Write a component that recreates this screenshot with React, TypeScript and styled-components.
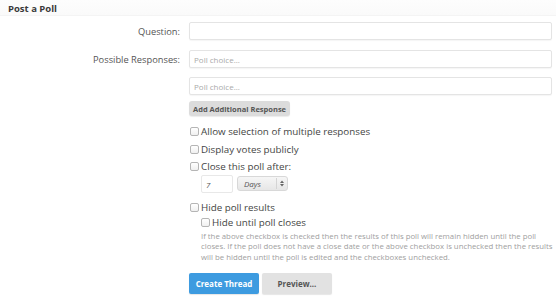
import React from "react";
import styled, { createGlobalStyle } from "styled-components";

const Global = createGlobalStyle`
  html, body { margin: 0; padding: 0; background: #fff; }
  body { font-family: "Open Sans", "Liberation Sans", sans-serif; color: #444; }
  * { box-sizing: border-box; }
`;

const Page = styled.div`
  width: 556px;
  height: 300px;
  overflow: hidden;
`;

const Header = styled.div`
  height: 16px;
  padding: 2px 0 0 8px;
  font-size: 9.5px;
  font-weight: 700;
  color: #3a3a3a;
  background: linear-gradient(#fdfdfd, #fafafa);
  border-bottom: 1px solid #f4f4f4;
`;

const Form = styled.div`
  display: grid;
  grid-template-columns: 180px 1fr;
  column-gap: 9px;
  padding: 6px 4px 0 0;
`;

const Label = styled.div<{ $top?: number }>`
  text-align: right;
  font-size: 9.3px;
  color: #555;
  padding-top: ${(p) => p.$top ?? 3}px;
`;

const Field = styled.div`
  display: flex;
  flex-direction: column;
  align-items: flex-start;
`;

const TextInput = styled.input`
  width: 363px;
  height: 18px;
  border: 1px solid #e4e4e4;
  border-radius: 2px;
  box-shadow: 0 1px 1px rgba(0, 0, 0, 0.04);
  background: #fff;
  font-family: inherit;
  font-size: 8px;
  padding: 0 4px;
  color: #444;
  outline: none;
  &::placeholder { color: #aaa; }
`;

const Stack = styled.div`
  display: flex;
  flex-direction: column;
  gap: 9px;
  margin-top: 10px;
`;

const SmallButton = styled.button`
  margin-top: 6px;
  height: 15px;
  padding: 0 4px;
  border: none;
  border-radius: 3px;
  background: #dcdcdc;
  box-shadow: 0 1px 1px rgba(0, 0, 0, 0.08);
  font-family: inherit;
  font-weight: 700;
  font-size: 7.5px;
  color: #555;
`;

const Options = styled.div`
  display: flex;
  flex-direction: column;
  margin-top: 7px;
`;

const CheckRow = styled.label<{ $indent?: number; $gap?: number }>`
  display: flex;
  align-items: center;
  gap: 2px;
  height: 17.5px;
  margin-left: ${(p) => p.$indent ?? 1}px;
  margin-top: ${(p) => p.$gap ?? 0}px;
  font-size: 9.8px;
  color: #444;
`;

const Box = styled.span`
  width: 9px;
  height: 9px;
  border: 1px solid #b5b5b5;
  border-radius: 2px;
  background: linear-gradient(#fff, #f0f0f0);
  flex: none;
`;

const DurationRow = styled.div`
  display: flex;
  align-items: center;
  gap: 4px;
  margin: -1px 0 0 12px;
`;

const NumInput = styled.div`
  width: 32px;
  height: 18px;
  border: 1px solid #e8e8e8;
  border-radius: 2px;
  font-size: 8px;
  font-style: italic;
  color: #555;
  padding: 3px 0 0 4px;
`;

const SelectBox = styled.div`
  width: 51px;
  height: 15px;
  border: 1px solid #d8d8d8;
  border-radius: 3px;
  background: linear-gradient(#f6f6f6, #e6e6e6);
  display: flex;
  align-items: center;
  justify-content: space-between;
  font-size: 8px;
  font-style: italic;
  color: #555;
  padding: 0 3px 0 6px;
`;

const Arrows = styled.span`
  display: flex;
  align-items: center;
  border-left: 1px solid #d4d4d4;
  padding-left: 3px;
  height: 11px;
`;

const Explain = styled.p`
  margin: -1px 0 0 12px;
  font-size: 7.8px;
  line-height: 10.5px;
  color: #a0a0a0;
  width: 352px;
`;

const Buttons = styled.div`
  display: flex;
  gap: 3px;
  margin-top: 11px;
`;

const Btn = styled.button<{ $primary?: boolean }>`
  width: 70px;
  height: 21px;
  padding: 0;
  white-space: nowrap;
  border: none;
  border-radius: 2px;
  font-family: inherit;
  font-weight: 700;
  font-size: 8px;
  color: ${(p) => (p.$primary ? "#fff" : "#555")};
  background: ${(p) => (p.$primary ? "#3d9be0" : "#e2e2e2")};
  box-shadow: 0 1px 1px rgba(0, 0, 0, 0.1);
`;

const Check = ({ children, indent, gap }: { children: React.ReactNode; indent?: number; gap?: number }) => (
  <CheckRow $indent={indent} $gap={gap}>
    <Box />
    {children}
  </CheckRow>
);

export default function App() {
  return (
    <Page>
      <Global />
      <Header>Post a Poll</Header>
      <Form>
        <Label>Question:</Label>
        <Field>
          <TextInput />
        </Field>
        <Label $top={13}>Possible Responses:</Label>
        <Stack>
          <TextInput placeholder="Poll choice..." />
          <TextInput placeholder="Poll choice..." />
        </Stack>
        <div />
        <Field>
          <SmallButton>Add Additional Response</SmallButton>
          <Options>
            <Check>Allow selection of multiple responses</Check>
            <Check>Display votes publicly</Check>
            <Check>Close this poll after:</Check>
            <DurationRow>
              <NumInput>7</NumInput>
              <SelectBox>
                Days
                <Arrows>
                  <svg width="4" height="7" viewBox="0 0 4 7">
                    <path d="M0 3 L2 0.5 L4 3 Z M0 4 L2 6.5 L4 4 Z" fill="#666" />
                  </svg>
                </Arrows>
              </SelectBox>
            </DurationRow>
            <Check gap={6}>Hide poll results</Check>
            <Check indent={12} gap={-2}>Hide until poll closes</Check>
            <Explain>
              If the above checkbox is checked then the results of this poll will remain hidden until the poll
              closes. If the poll does not have a close date or the above checkbox is unchecked then the
              results will be hidden until the poll is edited and the checkboxes unchecked.
            </Explain>
          </Options>
          <Buttons>
            <Btn $primary>Create Thread</Btn>
            <Btn>Preview...</Btn>
          </Buttons>
        </Field>
      </Form>
    </Page>
  );
}
